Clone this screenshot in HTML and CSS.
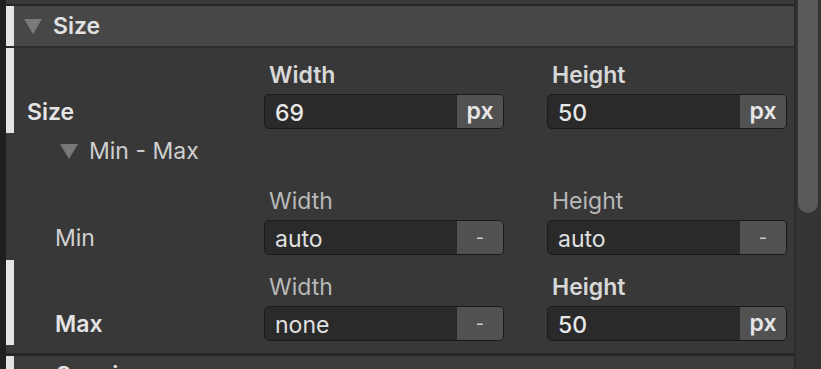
FILE: index.html
```html
<!DOCTYPE html>
<html>
<head>
<meta charset="utf-8">
<link rel="stylesheet" href="styles.css">
</head>
<body>
<div class="app">
  <div class="edge"></div>
  <div class="panel">
    <div class="prev"></div>
    <div class="sec-head open">
      <svg class="tri" width="18" height="15" viewBox="0 0 18 15"><polygon points="0,0 18,0 9,15" fill="#7a7a7a"/></svg>
      <span class="sec-title">Size</span>
    </div>
    <div class="row set">
      <div class="label strong">Size</div>
      <div class="fields">
        <div class="field">
          <div class="flabel strong">Width</div>
          <div class="input"><span class="val">69</span><span class="unit">px</span></div>
        </div>
        <div class="field">
          <div class="flabel strong">Height</div>
          <div class="input"><span class="val">50</span><span class="unit">px</span></div>
        </div>
      </div>
    </div>
    <div class="sub-head">
      <svg class="tri" width="18" height="15" viewBox="0 0 18 15"><polygon points="0,0 18,0 9,15" fill="#787878"/></svg>
      <span class="sub-title">Min - Max</span>
    </div>
    <div class="row min">
      <div class="label indent">Min</div>
      <div class="fields">
        <div class="field">
          <div class="flabel">Width</div>
          <div class="input"><span class="val plain">auto</span><span class="unit dash">-</span></div>
        </div>
        <div class="field">
          <div class="flabel">Height</div>
          <div class="input"><span class="val plain">auto</span><span class="unit dash">-</span></div>
        </div>
      </div>
    </div>
    <div class="row set">
      <div class="label indent strong">Max</div>
      <div class="fields">
        <div class="field">
          <div class="flabel">Width</div>
          <div class="input"><span class="val plain">none</span><span class="unit dash">-</span></div>
        </div>
        <div class="field">
          <div class="flabel strong">Height</div>
          <div class="input"><span class="val">50</span><span class="unit">px</span></div>
        </div>
      </div>
    </div>
    <div class="sec-end"></div>
    <div class="sec-head next">
      <svg class="tri" width="18" height="15" viewBox="0 0 18 15"><polygon points="0,0 15,7.5 0,15" fill="#7a7a7a"/></svg>
      <span class="sec-title">Spacing</span>
    </div>
  </div>
  <div class="scroll"><div class="thumb"></div></div>
</div>
</body>
</html>
```

FILE: styles.css
```css
* { box-sizing: border-box; }
html, body {
  margin: 0;
  padding: 0;
  height: 100%;
  overflow: hidden;
  background: #1f1f1f;
}
body {
  font-family: Inter, "Noto Sans", sans-serif;
  font-size: 23px;
  color: #e0e0e0;
}
.app {
  display: flex;
  height: 369px;
  width: 821px;
}
.edge {
  width: 6px;
  flex: none;
  background: #1f1f1f;
}
.panel {
  flex: 1;
  background: #383838;
  overflow: hidden;
}
.prev {
  height: 4px;
  background: #383838;
}
.sec-head {
  height: 44px;
  border-top: 2px solid #262626;
  border-bottom: 2px solid #2c2c2c;
  background: #474747;
  box-shadow: inset 8px 0 0 #e4e4e4;
  display: flex;
  align-items: center;
  padding-left: 18px;
}
.sec-head .tri { margin-right: 11px; flex: none; }
.sec-head.next {
  border-top: 3px solid #262626;
  border-bottom: none;
  background: #3b3b3b;
  align-items: flex-start;
  padding-top: 5px;
}
.sec-head.next .tri { margin-top: 8px; margin-left: 2px; margin-right: 12px; }
.sec-title {
  font-weight: 600;
  color: #e2e2e2;
  line-height: 28px;
}
.row {
  display: flex;
  padding: 13px 0 4px 8px;
}
.row.set { box-shadow: inset 8px 0 0 #e4e4e4; }
.row.min { padding-top: 13px; padding-bottom: 5px; }
.label {
  width: 250px;
  flex: none;
  align-self: flex-end;
  line-height: 35px;
  height: 35px;
  padding-left: 13px;
  padding-top: 1px;
  color: #d2d2d2;
  font-weight: 400;
}
.label.indent { padding-left: 41px; }
.strong { font-weight: 600; color: #e2e2e2; }
.label.strong { color: #e4e4e4; }
.fields {
  display: flex;
  gap: 43px;
}
.field {
  width: 240px;
  display: flex;
  flex-direction: column;
  gap: 5px;
}
.flabel {
  line-height: 28px;
  padding-left: 5px;
  color: #b9b9b9;
  font-weight: 400;
}
.flabel.strong { color: #d8d8d8; font-weight: 600; }
.input {
  height: 35px;
  display: flex;
  background: #2a2a2a;
  border: 1px solid #1a1a1a;
  border-radius: 5px;
  overflow: hidden;
}
.val {
  flex: 1;
  line-height: 33px;
  padding-top: 2px;
  padding-left: 10px;
  font-weight: 500;
  color: #e8e8e8;
}
.val.plain { font-weight: 400; color: #e0e0e0; }
.unit {
  width: 46px;
  flex: none;
  background: #515151;
  text-align: center;
  line-height: 31px;
  padding-top: 1px;
  font-weight: 600;
  color: #e6e6e6;
}
.unit.dash {
  font-weight: 400;
  color: #d0d0d0;
  font-size: 18px;
  line-height: 33px;
  padding-top: 0;
}
.sub-head {
  height: 41px;
  display: flex;
  align-items: flex-start;
  padding-top: 4px;
  padding-left: 54px;
}
.sub-head .tri { margin-top: 7px; margin-right: 11px; flex: none; }
.sub-title {
  line-height: 28px;
  color: #cfcfcf;
  font-weight: 400;
}
.sec-end {
  height: 8px;
}
.scroll {
  width: 27px;
  flex: none;
  background: #343434;
  border-left: 2px solid #2a2a2a;
  padding-left: 2px;
}
.thumb {
  width: 20px;
  height: 213px;
  background: #5a5a5a;
  border-radius: 0 0 10px 10px;
}
```
